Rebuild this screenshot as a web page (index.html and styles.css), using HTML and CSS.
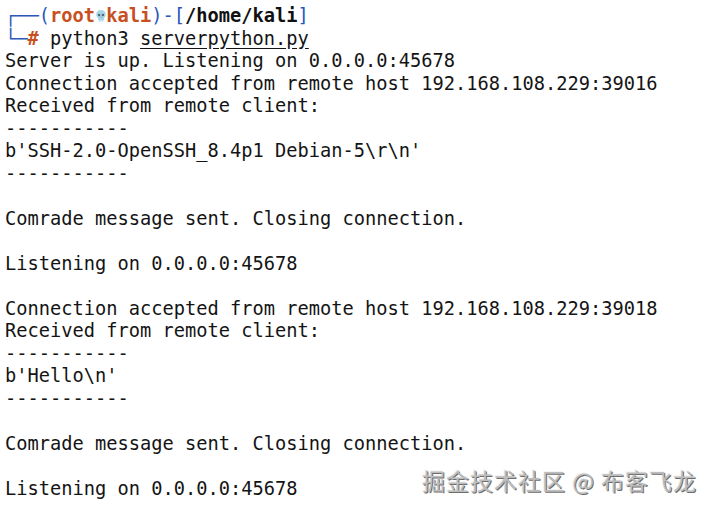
FILE: index.html
```html
<!DOCTYPE html>
<html>
<head>
<meta charset="utf-8">
<link rel="stylesheet" href="styles.css">
</head>
<body>
<div class="term">
<div class="out">
<div class="ln"><span class="b">┌──(</span><span class="r">root</span><span class="skull"><svg viewBox="0 0 12 14" width="12" height="14"><path d="M6 1C3 1 1.2 3 1.2 5.6c0 1.6.7 2.7 1.8 3.3v2.3h6V8.9c1.1-.6 1.8-1.7 1.8-3.3C10.8 3 9 1 6 1z" fill="#a9d6e6"/><ellipse cx="4.1" cy="6" rx="1.2" ry="1.3" fill="#4a6a78"/><ellipse cx="7.9" cy="6" rx="1.2" ry="1.3" fill="#4a6a78"/><path d="M5.4 8.6h1.2l-.6-1z" fill="#4a6a78"/><path d="M4.3 11.2v1.6M6 11.2v1.6M7.7 11.2v1.6" stroke="#a9d6e6" stroke-width="1"/></svg></span><span class="r">kali</span><span class="b">)-[</span><span class="k">/home/kali</span><span class="b">]</span></div>
<div class="ln"><span class="b">└─</span><span class="r">#</span> python3 <span class="u">serverpython.py</span></div>
<div class="ln">Server is up. Listening on 0.0.0.0:45678</div>
<div class="ln">Connection accepted from remote host 192.168.108.229:39016</div>
<div class="ln">Received from remote client:</div>
<div class="ln">-----------</div>
<div class="ln">b'SSH-2.0-OpenSSH_8.4p1 Debian-5\r\n'</div>
<div class="ln">-----------</div>
<div class="ln"></div>
<div class="ln">Comrade message sent. Closing connection.</div>
<div class="ln"></div>
<div class="ln">Listening on 0.0.0.0:45678</div>
<div class="ln"></div>
<div class="ln">Connection accepted from remote host 192.168.108.229:39018</div>
<div class="ln">Received from remote client:</div>
<div class="ln">-----------</div>
<div class="ln">b'Hello\n'</div>
<div class="ln">-----------</div>
<div class="ln"></div>
<div class="ln">Comrade message sent. Closing connection.</div>
<div class="ln"></div>
<div class="ln">Listening on 0.0.0.0:45678</div>
</div>
<div class="mark">掘金技术社区 @ 布客飞龙</div>
</div>
</body>
</html>
```
FILE: styles.css
```css
html, body {
  margin: 0;
  padding: 0;
  background: #ffffff;
}
.term {
  position: relative;
  width: 713px;
  height: 510px;
  overflow: hidden;
}
.out {
  padding: 5px 0 0 5px;
  font-family: "DejaVu Sans Mono", "Liberation Mono", monospace;
  font-size: 18.7px;
  line-height: 22.5px;
  color: #141414;
}
.ln {
  white-space: pre;
  height: 22.5px;
  width: max-content;
}
.b { color: #2b57bb; }
.r { color: #c8501e; font-weight: bold; }
.k { color: #111; font-weight: bold; }
.u { text-decoration: underline; text-underline-offset: 3px; }
.skull {
  display: inline-block;
  width: 11.26px;
  text-align: center;
  vertical-align: -1px;
}
.skull svg { display: inline-block; margin-left: -0.4px; }
.mark {
  position: absolute;
  left: 422px;
  top: 465px;
  font-family: "Noto Sans CJK SC", sans-serif;
  font-size: 23px;
  line-height: 30px;
  color: #bdbdbd;
  text-shadow: 1px 1px 0 #6d6d6d, -1px -1px 0 #f4f4f4;
  letter-spacing: 1px;
}
```
